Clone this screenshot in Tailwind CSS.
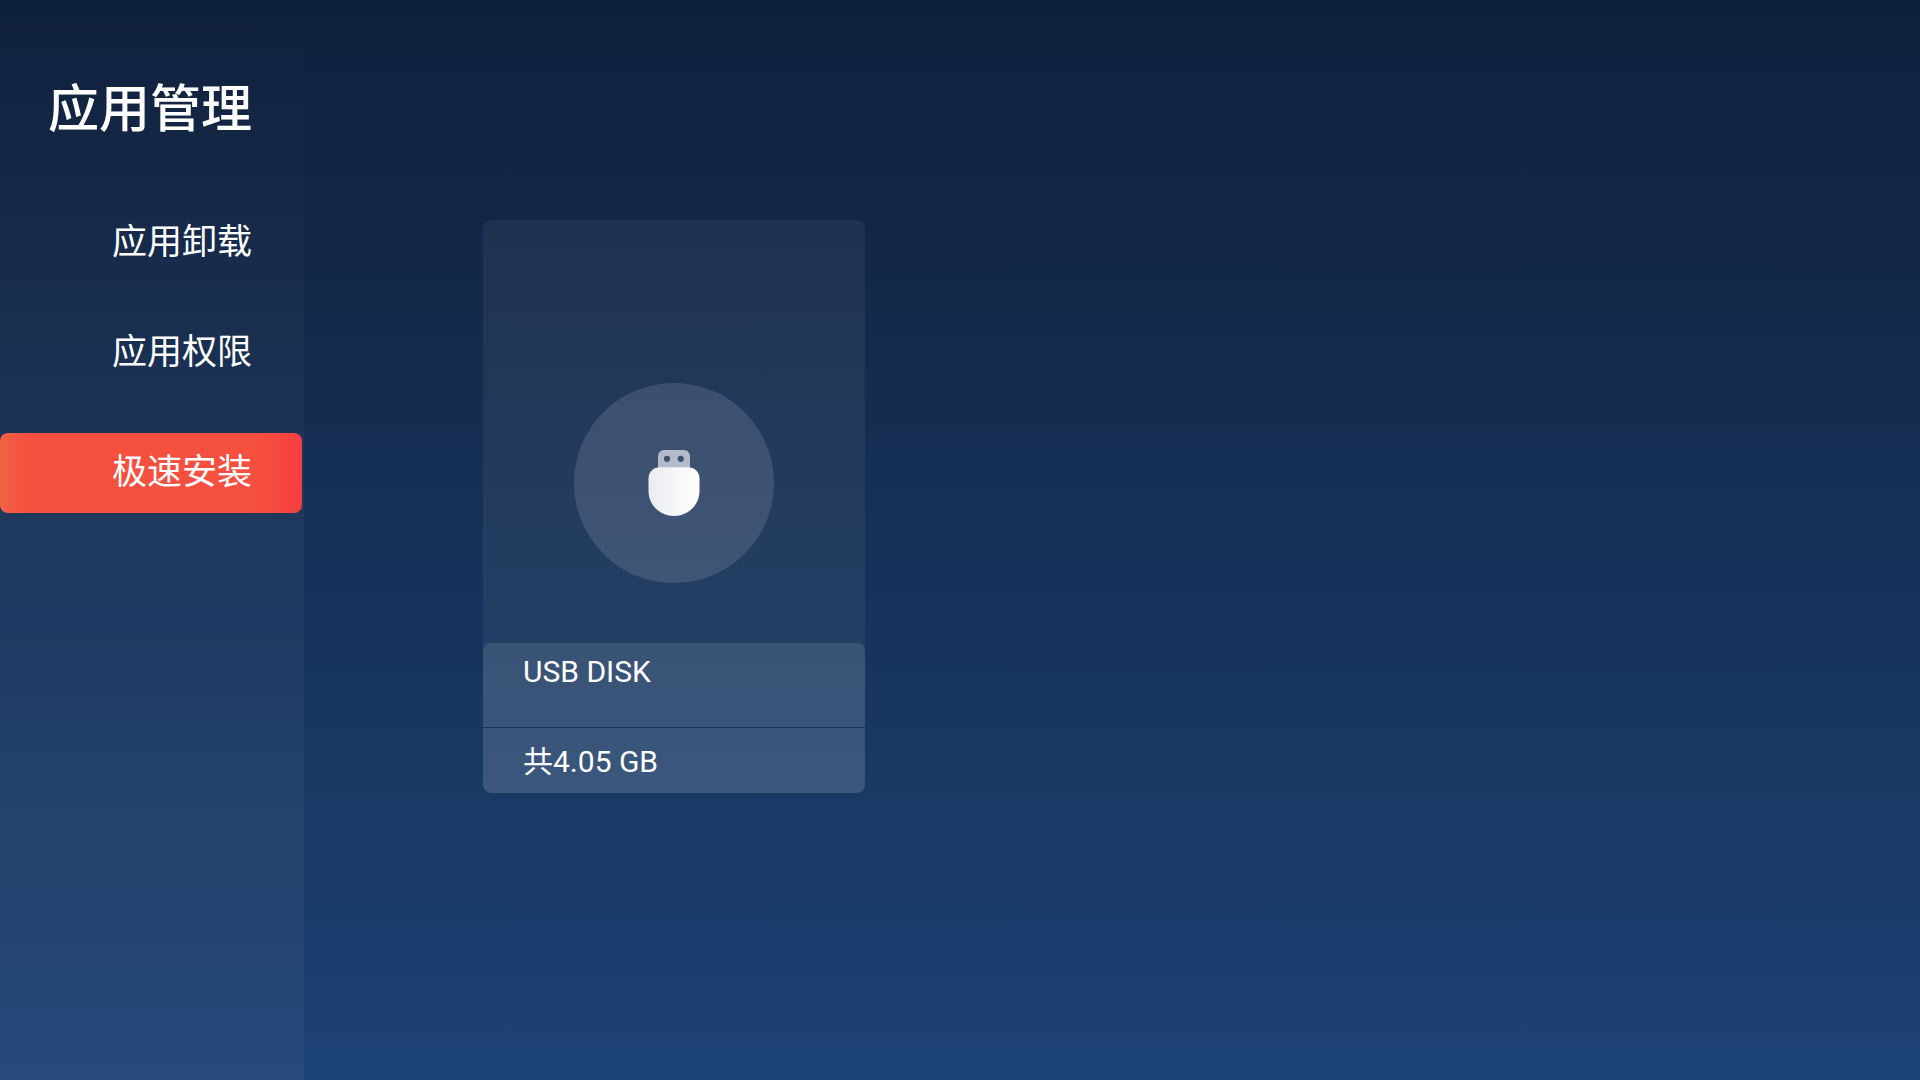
<!DOCTYPE html>
<html lang="zh-CN">

<head>
    <meta charset="UTF-8" />
    <meta name="viewport" content="width=device-width, initial-scale=1.0" />
    <title>应用管理</title>
    <script src="https://cdn.jsdelivr.net/npm/@tailwindcss/browser@4"></script>
</head>

<body class="min-h-screen flex bg-linear-to-b from-[#0f203b] to-[#1d4275] text-white font-['Roboto','Noto_Sans_CJK_SC',sans-serif]">
    <!-- sidebar -->
    <aside class="w-[304px] shrink-0 bg-linear-to-b from-white/0 via-white/4 to-white/4 pt-[73px]">
        <h1 class="pr-[52px] text-right text-[51px] leading-[74px] font-medium">应用管理</h1>
        <nav class="mt-14 mr-[2px] flex flex-col gap-[30px] text-[35px]">
            <a href="#uninstall" class="flex h-20 items-center justify-end rounded-lg pr-[50px]">应用卸载</a>
            <a href="#permission" class="flex h-20 items-center justify-end rounded-lg pr-[50px]">应用权限</a>
            <a href="#install" aria-current="page"
                class="mt-[10px] flex h-20 items-center justify-end rounded-lg bg-[linear-gradient(to_right,#f36244,#f54f40_10%,#f54f40_86%,#f63e40)] pr-[50px]">极速安装</a>
        </nav>
    </aside>

    <!-- storage devices -->
    <main class="flex-grow pt-[220px] pl-[179px]">
        <a href="#usb" class="flex w-[382px] flex-col overflow-hidden rounded-lg bg-white/6">
            <div class="flex h-[423px] flex-col items-center justify-end pb-[60px]">
                <div class="flex size-[200px] items-center justify-center rounded-full bg-[#e6e4f0]/14">
                    <svg width="52" height="66" viewBox="0 0 52 66" aria-hidden="true">
                        <defs>
                            <linearGradient id="usbBody" x1="0" y1="0" x2="1" y2="0">
                                <stop offset="0" stop-color="#ebecf1" />
                                <stop offset="1" stop-color="#ffffff" />
                            </linearGradient>
                        </defs>
                        <path fill="#b3bbca" fill-rule="evenodd"
                            d="M10 18V6a6 6 0 0 1 6-6h20a6 6 0 0 1 6 6v12zM19 5.700a3.100 3.100 0 1 0 0 6.200a3.100 3.100 0 1 0 0-6.200zM32.700 5.700a3.100 3.100 0 1 0 0 6.200a3.100 3.100 0 1 0 0-6.200z" />
                        <path fill="url(#usbBody)"
                            d="M12 17.300H40C46.500 17.300 51.500 22 51.500 28.500V41C51.500 55 40 66 26 66S.5 55 .5 41V28.500C.5 22 5.500 17.300 12 17.300z" />
                    </svg>
                </div>
            </div>
            <div class="rounded-lg bg-[#e8f4f8]/11 text-[30px] leading-[36px]">
                <p class="h-[84px] px-10 pt-[11px]">USB DISK</p>
                <div class="h-px bg-[#18355e]"></div>
                <p class="h-[65px] px-10 pt-4">共4.05 GB</p>
            </div>
        </a>
    </main>
</body>

</html>
